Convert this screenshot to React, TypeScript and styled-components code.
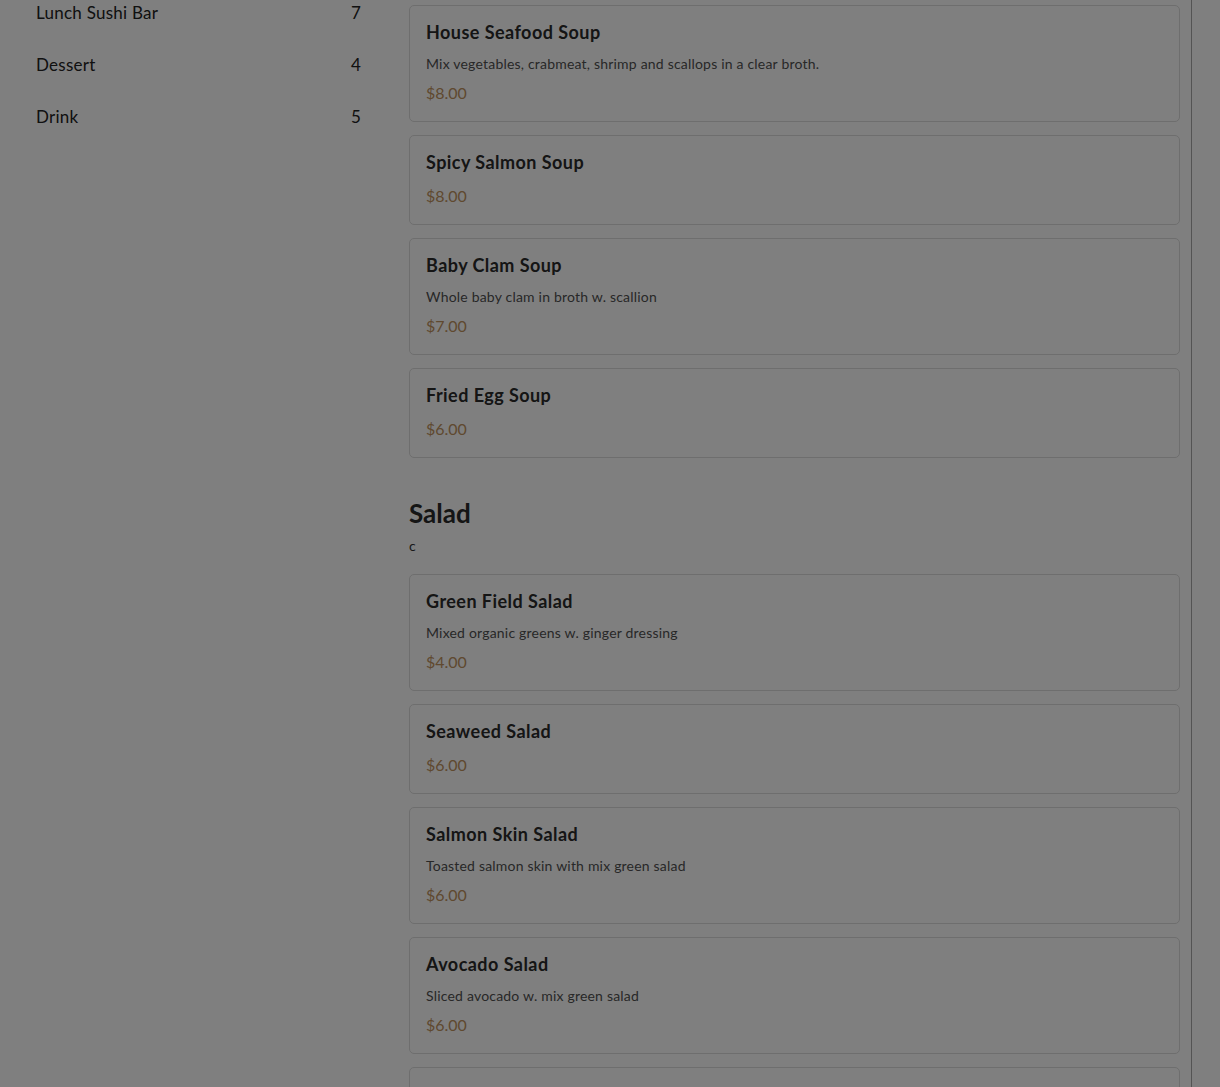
import React from "react";
import styled, { createGlobalStyle } from "styled-components";

const Global = createGlobalStyle`
  html, body { margin: 0; padding: 0; background: #ffffff; }
  body { font-family: Lato, "Noto Sans", sans-serif; color: #222; overflow: hidden; }
`;

const Page = styled.div`
  display: flex;
  align-items: flex-start;
  gap: 48px;
  padding-left: 36px;
  height: 1087px;
  overflow: hidden;
`;

const Sidebar = styled.nav`
  width: 325px;
  flex: none;
  display: flex;
  flex-direction: column;
  margin-top: -14px;
`;

const CatRow = styled.div`
  display: flex;
  justify-content: space-between;
  align-items: center;
  height: 52px;
  font-size: 17px;
  letter-spacing: 0.25px;
  color: #222;
`;

const Main = styled.main`
  width: 771px;
  flex: none;
  padding: 5px 11px 0 0;
  border-right: 1px solid #a8a8a8;
  min-height: 1087px;
  display: flex;
  flex-direction: column;
`;

const Section = styled.section`
  display: flex;
  flex-direction: column;
  margin-bottom: 39px;
`;

const SectionTitle = styled.h2`
  margin: 0 0 7px;
  font-size: 26px;
  line-height: 32px;
  font-weight: 700;
  color: #2a2a2a;
`;

const SectionDesc = styled.div`
  font-size: 14px;
  line-height: 20px;
  color: #333;
  margin-bottom: 18px;
`;

const CardList = styled.div`
  display: flex;
  flex-direction: column;
  gap: 13px;
`;

const Card = styled.div`
  border: 1px solid #dcdcdc;
  border-radius: 5px;
  padding: 16px 16px 17px;
  background: #fff;
  display: flex;
  flex-direction: column;
`;

const ItemName = styled.div`
  font-size: 18px;
  line-height: 20px;
  font-weight: 700;
  letter-spacing: 0.45px;
  color: #2a2a2a;
  margin-bottom: 13px;
`;

const ItemDesc = styled.div`
  font-size: 14px;
  line-height: 18px;
  letter-spacing: 0.2px;
  color: #505050;
  margin-bottom: 9px;
`;

const Price = styled.div`
  font-size: 16px;
  line-height: 22px;
  color: #c0925e;
`;

const Overlay = styled.div`
  position: fixed;
  inset: 0;
  background: rgba(0, 0, 0, 0.5);
  pointer-events: none;
`;

type Item = { name: string; desc?: string; price: string };

const soups: Item[] = [
  { name: "House Seafood Soup", desc: "Mix vegetables, crabmeat, shrimp and scallops in a clear broth.", price: "$8.00" },
  { name: "Spicy Salmon Soup", price: "$8.00" },
  { name: "Baby Clam Soup", desc: "Whole baby clam in broth w. scallion", price: "$7.00" },
  { name: "Fried Egg Soup", price: "$6.00" },
];

const salads: Item[] = [
  { name: "Green Field Salad", desc: "Mixed organic greens w. ginger dressing", price: "$4.00" },
  { name: "Seaweed Salad", price: "$6.00" },
  { name: "Salmon Skin Salad", desc: "Toasted salmon skin with mix green salad", price: "$6.00" },
  { name: "Avocado Salad", desc: "Sliced avocado w. mix green salad", price: "$6.00" },
  { name: "Kani Seafood Salad", desc: "Crabmeat, cucumber and masago", price: "$7.00" },
];

const cats = [
  { name: "Lunch Sushi Bar", count: 7 },
  { name: "Dessert", count: 4 },
  { name: "Drink", count: 5 },
];

function ItemCard({ item }: { item: Item }) {
  return (
    <Card>
      <ItemName>{item.name}</ItemName>
      {item.desc && <ItemDesc>{item.desc}</ItemDesc>}
      <Price>{item.price}</Price>
    </Card>
  );
}

export default function App() {
  return (
    <>
      <Global />
      <Page>
        <Sidebar>
          {cats.map((c) => (
            <CatRow key={c.name}>
              <span>{c.name}</span>
              <span>{c.count}</span>
            </CatRow>
          ))}
        </Sidebar>
        <Main>
          <Section>
            <CardList>
              {soups.map((i) => (
                <ItemCard key={i.name} item={i} />
              ))}
            </CardList>
          </Section>
          <Section>
            <SectionTitle>Salad</SectionTitle>
            <SectionDesc>c</SectionDesc>
            <CardList>
              {salads.map((i) => (
                <ItemCard key={i.name} item={i} />
              ))}
            </CardList>
          </Section>
        </Main>
      </Page>
      <Overlay />
    </>
  );
}
